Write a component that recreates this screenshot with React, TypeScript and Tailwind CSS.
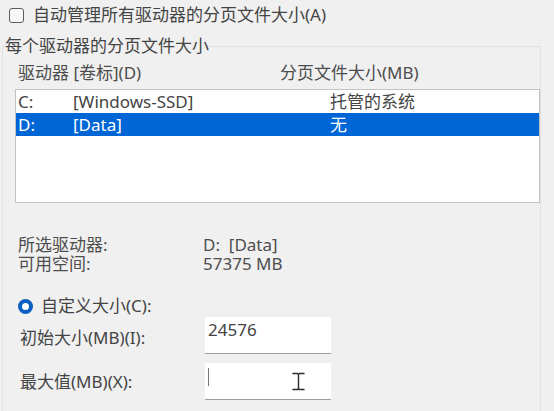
const font = { fontFamily: '"Noto Sans", "Noto Sans CJK SC", sans-serif' };

function Checkbox() {
  return <div className="w-[15px] h-[15px] rounded-[3px] border border-[#5c5c5c] bg-[#f8f8f8]" />;
}

function Radio() {
  return (
    <div className="w-[15px] h-[15px] rounded-full bg-[#0a5fc0] flex items-center justify-center">
      <div className="w-[7px] h-[7px] rounded-full bg-white" />
    </div>
  );
}

const drives = [
  { letter: "C:", label: "[Windows-SSD]", size: "托管的系统", selected: false },
  { letter: "D:", label: "[Data]", size: "无", selected: true },
];

export default function App() {
  return (
    <div
      className="w-[554px] h-[411px] bg-[#f0f0f0] overflow-hidden text-[17px] text-[#444444]"
      style={font}
    >
      {/* auto manage checkbox */}
      <div className="flex items-center h-[22px] mt-[4px] pl-[9px] gap-[9px] leading-[20px]">
        <Checkbox />
        <span>自动管理所有驱动器的分页文件大小(A)</span>
      </div>

      <fieldset className="mt-[10px] ml-[2px] w-[539px] h-[420px] border border-[#e2e2e2]">
        <legend className="ml-[2px] leading-[20px]">每个驱动器的分页文件大小</legend>

        {/* column header */}
        <div className="flex mt-[7px] pl-[15px] leading-[20px] text-[#4d4d4d]">
          <span className="w-[262px]">驱动器 [卷标](D)</span>
          <span>分页文件大小(MB)</span>
        </div>

        {/* drive list */}
        <div className="mt-[6px] ml-[12px] w-[525px] h-[114px] border border-[#c2c2c2] bg-white">
          {drives.map((d) => (
            <div
              key={d.letter}
              className={
                "flex items-center h-[23px] pl-[2px] leading-[20px] " +
                (d.selected ? "bg-[#0066d6] text-white" : "text-[#444444]")
              }
            >
              <span className="w-[55px]">{d.letter}</span>
              <span className="w-[257px]">{d.label}</span>
              <span>{d.size}</span>
            </div>
          ))}
        </div>

        {/* selected drive info */}
        <div className="mt-[32px] pl-[15px] leading-[19px] text-[#4d4d4d]">
          <div className="flex">
            <span className="w-[185px]">所选驱动器:</span>
            <span>D:&nbsp; [Data]</span>
          </div>
          <div className="flex">
            <span className="w-[185px]">可用空间:</span>
            <span>57375 MB</span>
          </div>
        </div>

        {/* custom size */}
        <div className="flex items-center gap-[8px] mt-[23px] pl-[15px] leading-[20px]">
          <Radio />
          <span>自定义大小(C):</span>
        </div>

        <div className="flex mt-[1px] pl-[17px]">
          <span className="w-[185px] pt-[11px] leading-[20px]">初始大小(MB)(I):</span>
          <div className="w-[126px] h-[37px] bg-white border-b border-[#9c9c9c] pl-[3px] pt-[3px] leading-[20px]">
            24576
          </div>
        </div>

        <div className="flex mt-[9px] pl-[17px]">
          <span className="w-[185px] pt-[9px] leading-[20px]">最大值(MB)(X):</span>
          <div className="relative w-[126px] h-[37px] bg-white border-b border-[#9c9c9c]">
            <div className="ml-[3px] mt-[5px] w-px h-[18px] bg-[#777]" />
            {/* mouse I-beam cursor */}
            <svg className="absolute left-[86px] top-[9px]" width="15" height="19" viewBox="0 0 15 19">
              <path
                d="M2 1.5h4.5l1 1 1-1h4.5M7.5 2.5v14M2 17.5h4.5l1-1 1 1h4.5"
                fill="none"
                stroke="#ffffff"
                strokeWidth="3"
                strokeLinecap="round"
              />
              <path
                d="M2 1.5h4.5l1 1 1-1h4.5M7.5 2.5v14M2 17.5h4.5l1-1 1 1h4.5"
                fill="none"
                stroke="#2a2a2a"
                strokeWidth="1.4"
                strokeLinecap="round"
              />
            </svg>
          </div>
        </div>
      </fieldset>
    </div>
  );
}
